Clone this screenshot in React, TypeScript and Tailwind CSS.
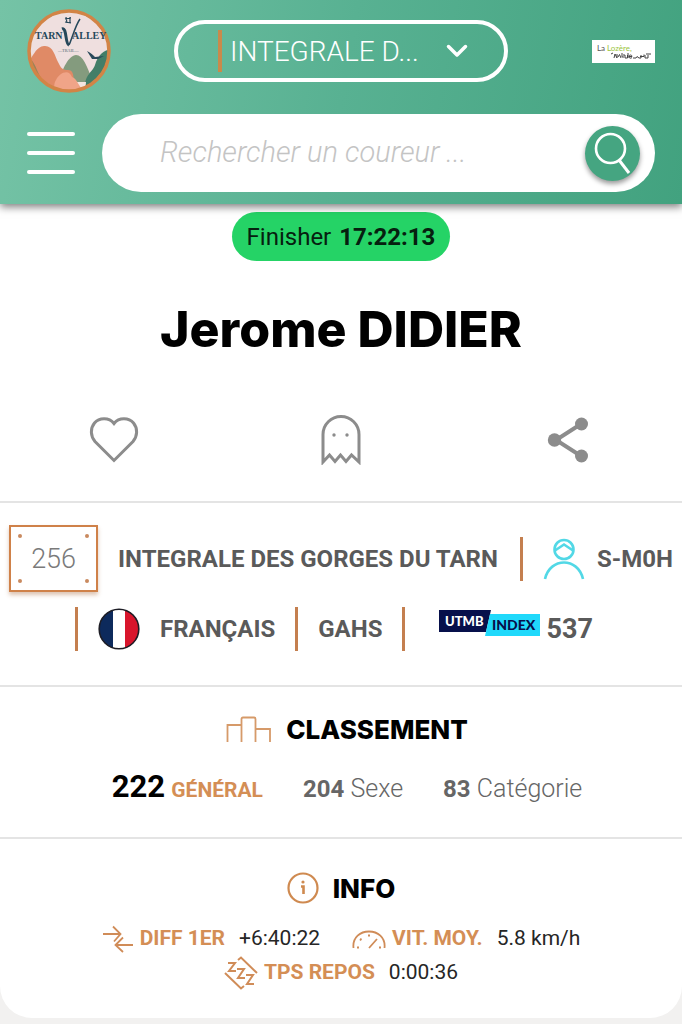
import type { ReactNode } from "react";

function TarnValleyLogo() {
  return (
    <svg viewBox="0 0 84 84" className="size-[84px]" role="img" aria-label="Tarn Valley Trail">
      <defs>
        <clipPath id="disc">
          <circle cx="42" cy="42" r="39" />
        </clipPath>
      </defs>
      <circle cx="42" cy="42" r="39" fill="#efdfdf" />
      <g clipPath="url(#disc)">
        <path d="M32 73C35 60 42 46 49 46S60 57 66 73Z" fill="#849b7e" />
        <path d="M58 78C58 65 65 64 68 56C71 47 75 42 84 40V84H58Z" fill="#437e68" />
        <path d="M34 73L59 73L58 84H34Z" fill="#f3e5df" />
        <path d="M0 54C6 49 8 38 17 37S28 47 31 53S35 61 41 61S47 67 47 84H0Z" fill="#e08a66" />
        <path d="M24 84C29 79 26 75 29 71C32 64 42 59 45 68C51 70 51 78 57 81V84Z" fill="#f0a488" />
        <path d="M4 52C9 58 10 67 16 73" fill="none" stroke="#9a8359" strokeWidth="2" />
        <path d="M60 42C64 44 66 46 68 48L77 47L71 50L65 50Z" fill="#29495a" />
      </g>
      <circle cx="42" cy="42" r="40" fill="none" stroke="#d28446" strokeWidth="3.5" />
      <g fill="#25475a" fontFamily="Liberation Serif, serif" fontWeight="700">
        <text x="8" y="30" fontSize="10">TARN</text>
        <text x="45" y="30" fontSize="10">ALLEY</text>
        <text x="31" y="43" fontSize="4" fill="#7f8d93">—TRAIL—</text>
      </g>
      <path d="M35 20C40 18 38 35 42 36" fill="none" stroke="#25475a" strokeWidth="3" />
      <path d="M42 36C45 30 48 17 53 10" fill="none" stroke="#25475a" strokeWidth="1.5" />
      <path d="M39 8L40 14M43 8L43 14M38 10L44 9M38 13L44 14" stroke="#25475a" strokeWidth="1.2" fill="none" />
    </svg>
  );
}

function SponsorLogo() {
  return (
    <svg viewBox="0 0 63 23" className="h-[23px] w-[63px]" role="img" aria-label="La Lozère naturellement">
      <rect width="63" height="23" fill="#fff" />
      <g fontFamily="Lato, sans-serif" fontSize="8">
        <text x="5" y="11" fill="#555">La</text>
        <text x="15" y="11" fill="#9bc53d">Lozère,</text>
      </g>
      <path
        d="M19 14l2-1M22 18l1-4l2 4v-4M26 17l1.500-2.500l1.500 3.500M30 13v4l2 0M31 15h2M33 15v3h2.500v-3M36 18v-5M37 16.500c0-2 3-2 3 0h-3c0 2 2 2 3 1M41 18h3l1-1.500l2 1.500h2v-3M48 16.500h4v-2M53 15v3h3v-3M54 14h5"
        fill="none"
        stroke="#444"
        strokeWidth="1"
      />
    </svg>
  );
}

function Header() {
  return (
    <header className="relative flex flex-col gap-[21px] bg-linear-[100deg,#75c3a6,#58b192_50%,#42a27f] px-[27px] pt-[9px] pb-3 shadow-[0_3px_8px_rgba(0,0,0,0.5)]">
      <div className="grid grid-cols-[84px_1fr_84px] items-center">
        <TarnValleyLogo />
        <div className="mx-auto flex h-[62px] w-[334px] items-center rounded-full border-4 border-white pr-9 pl-10">
          <span className="h-[42px] w-1 bg-[#c98a4b]" />
          <div className="relative flex flex-1 items-center">
            <select
              aria-label="Course"
              className="h-10 w-full appearance-none bg-transparent pb-1 pl-2 text-[28px] font-light text-white outline-none"
            >
              <option>INTEGRALE D...</option>
            </select>
            <svg
              viewBox="0 0 22 14"
              className="pointer-events-none absolute right-0 h-[14px] w-[22px]"
              fill="none"
              stroke="#fff"
              strokeWidth="3.5"
              strokeLinecap="round"
              strokeLinejoin="round"
            >
              <path d="M2.500 2.500L11 11L19.500 2.500" />
            </svg>
          </div>
        </div>
        <a href="#sponsor" className="justify-self-end"><SponsorLogo /></a>
      </div>
      <div className="flex items-center gap-[27px]">
        <button aria-label="Menu" className="flex w-12 flex-col gap-[15px]">
          <span className="h-1 rounded-full bg-white" />
          <span className="h-1 rounded-full bg-white" />
          <span className="h-1 rounded-full bg-white" />
        </button>
        <form className="flex h-[78px] min-w-0 flex-1 items-center rounded-full bg-white pr-[15px] pl-[58px]">
          <input
            type="search"
            aria-label="Rechercher un coureur"
            placeholder="Rechercher un coureur ..."
            className="min-w-0 flex-1 text-[29px] font-light italic outline-none placeholder:text-[#c4c4c4]"
          />
          <button
            type="button"
            aria-label="Rechercher"
            className="flex size-[55px] items-center justify-center rounded-full bg-[#45a581] shadow-[0_3px_5px_rgba(0,0,0,0.4)]"
          >
            <svg viewBox="0 0 55 55" className="size-[55px]" fill="none" stroke="#fff" strokeWidth="2.600">
              <circle cx="25.500" cy="22.500" r="14.500" />
              <path d="M34 34L44 47" strokeWidth="3" />
            </svg>
          </button>
        </form>
      </div>
    </header>
  );
}

function Actions() {
  return (
    <div className="mt-[58px] grid grid-cols-3 justify-items-center">
      <button aria-label="Favori">
        <svg viewBox="0 0 50 50" className="size-[50px]" fill="none" stroke="#8c8c8c" strokeWidth="3">
          <path d="M25 8.500C20 2 10 2.500 5.500 8C1 13.500 1.500 21 6 26.500L25 45.500L44 26.500C48.500 21 49 13.500 44.500 8C40 2.500 30 2 25 8.500Z" />
        </svg>
      </button>
      <button aria-label="Fantôme">
        <svg viewBox="0 0 50 50" className="size-[50px]" fill="none" stroke="#8c8c8c" strokeWidth="3">
          <path d="M7 47V19.500a18 18 0 0 1 36 0V47L35.500 40L30 46.500L24.500 40L19 46.500L13.500 40Z" />
          <circle cx="18" cy="20" r="1.700" fill="#8c8c8c" stroke="none" />
          <circle cx="31" cy="20" r="1.700" fill="#8c8c8c" stroke="none" />
        </svg>
      </button>
      <button aria-label="Partager">
        <svg viewBox="0 0 50 50" className="size-[50px]" fill="#8c8c8c" stroke="#8c8c8c">
          <path d="M38 9L13 25L38 41" fill="none" strokeWidth="4" />
          <circle cx="38.500" cy="9" r="6.500" stroke="none" />
          <circle cx="11.500" cy="25" r="6.700" stroke="none" />
          <circle cx="38.500" cy="41" r="6.500" stroke="none" />
        </svg>
      </button>
    </div>
  );
}

function Bar() {
  return <span className="h-11 w-[3px] shrink-0 bg-[#c47f4f]" />;
}

function Bib() {
  return (
    <div className="grid h-[67px] w-[89px] shrink-0 grid-cols-[4px_1fr_4px] grid-rows-[4px_1fr_4px] border-2 border-[#cf8149] p-[7px] shadow-[0_3px_4px_rgba(160,90,40,0.35)]">
      <span className="size-1 rounded-full bg-[#c98a5f]" />
      <span className="col-start-3 size-1 rounded-full bg-[#c98a5f]" />
      <span className="col-start-2 row-start-2 self-center text-center text-[27px] leading-8 font-light text-[#7a7a7a]">256</span>
      <span className="col-start-1 row-start-3 size-1 rounded-full bg-[#c98a5f]" />
      <span className="col-start-3 row-start-3 size-1 rounded-full bg-[#c98a5f]" />
    </div>
  );
}

function Identity() {
  return (
    <section className="mt-9 border-t-2 border-[#e4e4e4] pt-[22px] pb-[34px] text-[24px] font-bold whitespace-nowrap text-[#5a5a5a]">
      <div className="flex items-center justify-center">
        <Bib />
        <span className="mr-[22px] ml-5">INTEGRALE DES GORGES DU TARN</span>
        <Bar />
        <svg viewBox="0 0 42 42" className="mr-3 ml-5 size-[42px] shrink-0" fill="none" stroke="#52d8e6" strokeWidth="2.600">
          <circle cx="21" cy="11.500" r="9.500" />
          <path d="M12 12.500L21 6.500L30 12.500" />
          <path d="M2 41C7 19 35 19 40 41" />
        </svg>
        <span>S-M0H</span>
      </div>
      <div className="mt-[15px] flex items-center pl-[75px]">
        <Bar />
        <svg viewBox="0 0 42 42" className="mx-5 size-[42px] shrink-0" role="img" aria-label="France">
          <defs>
            <clipPath id="flag"><circle cx="21" cy="21" r="20" /></clipPath>
          </defs>
          <g clipPath="url(#flag)">
            <path d="M0 0H15V42H0Z" fill="#0d2a5c" />
            <path d="M15 0H27V42H15Z" fill="#fff" />
            <path d="M27 0H42V42H27Z" fill="#d8152c" />
          </g>
          <circle cx="21" cy="21" r="19.800" fill="none" stroke="#1d1d25" strokeWidth="1.600" />
        </svg>
        <span className="mr-5">FRANÇAIS</span>
        <Bar />
        <span className="mx-5">GAHS</span>
        <Bar />
        <svg viewBox="0 0 101 26" className="mb-3 ml-[34px] h-[26px] w-[101px] shrink-0">
          <path d="M0 0H52L47 22H0Z" fill="#07104b" />
          <path d="M51 4H101V26H46Z" fill="#20d9fb" />
          <g fontFamily="Lato, sans-serif" fontWeight="900">
            <text x="6" y="16" fontSize="13" fill="#fff">UTMB</text>
            <text x="53" y="20" fontSize="14" fill="#07104b">INDEX</text>
          </g>
        </svg>
        <span className="ml-1.5 text-[27px]">537</span>
      </div>
    </section>
  );
}

function Heading({ icon, children }: { icon: ReactNode; children: ReactNode }) {
  return (
    <h2 className="flex h-8 items-center justify-center gap-[14px] font-['Inter',sans-serif] text-[26px] font-extrabold text-black">
      {icon}
      {children}
    </h2>
  );
}

function Ranking() {
  return (
    <section className="border-t-2 border-[#e4e4e4] pt-[26px] pb-[33px] pl-3">
      <Heading
        icon={
          <svg viewBox="0 0 46 28" className="h-7 w-[46px]" fill="none" stroke="#d69a69" strokeWidth="1.800">
            <path d="M1.500 27V10H15.500M15.500 27V4Q15.500 2.500 17 2.500H28Q29.500 2.500 29.500 4V27M29.500 14H44V27" />
          </svg>
        }
      >
        CLASSEMENT
      </Heading>
      <div className="mt-[26px] mb-px flex h-8 items-baseline justify-center gap-10 text-[25px] leading-8 text-[#666]">
        <p><strong className="text-[31px] text-black">222</strong> <strong className="text-[21px] text-[#d48e55]">GÉNÉRAL</strong></p>
        <p><strong className="text-[24px]">204</strong> <span className="font-light">Sexe</span></p>
        <p><strong className="text-[24px]">83</strong> <span className="font-light">Catégorie</span></p>
      </div>
    </section>
  );
}

function Stat({ icon, label, value }: { icon: ReactNode; label: string; value: string }) {
  return (
    <div className="flex h-[34px] items-center">
      {icon}
      <dt className="ml-1.5 font-bold text-[#d48e55]">{label}</dt>
      <dd className="ml-[14px] text-[#262626]">{value}</dd>
    </div>
  );
}

function Info() {
  return (
    <section className="border-t-2 border-[#e4e4e4] pt-[33px] pb-7">
      <Heading
        icon={
          <svg viewBox="0 0 32 32" className="size-8" fill="none" stroke="#cf8a50" strokeWidth="2.200">
            <circle cx="16" cy="16" r="14.500" />
            <path d="M14 14.500H16.500V22" strokeWidth="2.600" />
            <circle cx="16" cy="10" r="1.600" fill="#cf8a50" stroke="none" />
          </svg>
        }
      >
        INFO
      </Heading>
      <dl className="mt-[18px] flex flex-wrap justify-center gap-x-8 px-20 text-[21px] whitespace-nowrap">
        <Stat
          icon={
            <svg viewBox="0 0 32 28" className="h-7 w-8" fill="none" stroke="#d08c58" strokeWidth="1.800">
              <path d="M1 9H18M11 1.500L18.500 9L12 16.500M31 20H14M21 12.500L13.500 20L21 27" />
            </svg>
          }
          label="DIFF 1ER"
          value="+6:40:22"
        />
        <Stat
          icon={
            <svg viewBox="0 0 34 28" className="h-7 w-[34px]" fill="none" stroke="#d08c58" strokeWidth="1.800">
              <path d="M1.500 23C-1 1 35 1 32.500 23M17 23L25 14" />
              <path d="M5 22.500h2M8 14l1.500 1M16 10.500h2M27 22.500h2" strokeWidth="2.200" />
            </svg>
          }
          label="VIT. MOY."
          value="5.8 km/h"
        />
        <Stat
          icon={
            <svg viewBox="0 0 34 34" className="size-[34px]" fill="none" stroke="#d08c58" strokeWidth="2">
              <path d="M14 4L17 1.500L33 17M1 17L17 32.500L20 30" />
              <path d="M4 7H11L5 15H12M13 13H20L14 22H21M22 19H29L23 28H30" />
            </svg>
          }
          label="TPS REPOS"
          value="0:00:36"
        />
      </dl>
    </section>
  );
}

export default function App() {
  return (
    <div className="min-h-screen bg-[#f2f1f0] font-['Roboto',sans-serif]">
      <Header />
      <main className="rounded-b-[32px] bg-white pt-2">
        <div className="mx-auto flex h-[49px] w-fit items-center gap-2 rounded-full bg-[#25d366] px-[15px] text-[24px] text-[#06200f]">
          <span>Finisher</span>
          <strong>17:22:13</strong>
        </div>
        <h1 className="mt-10 text-center font-['Inter',sans-serif] text-[50px] leading-[56px] font-extrabold text-black">
          Jerome DIDIER
        </h1>
        <Actions />
        <Identity />
        <Ranking />
        <Info />
      </main>
    </div>
  );
}
